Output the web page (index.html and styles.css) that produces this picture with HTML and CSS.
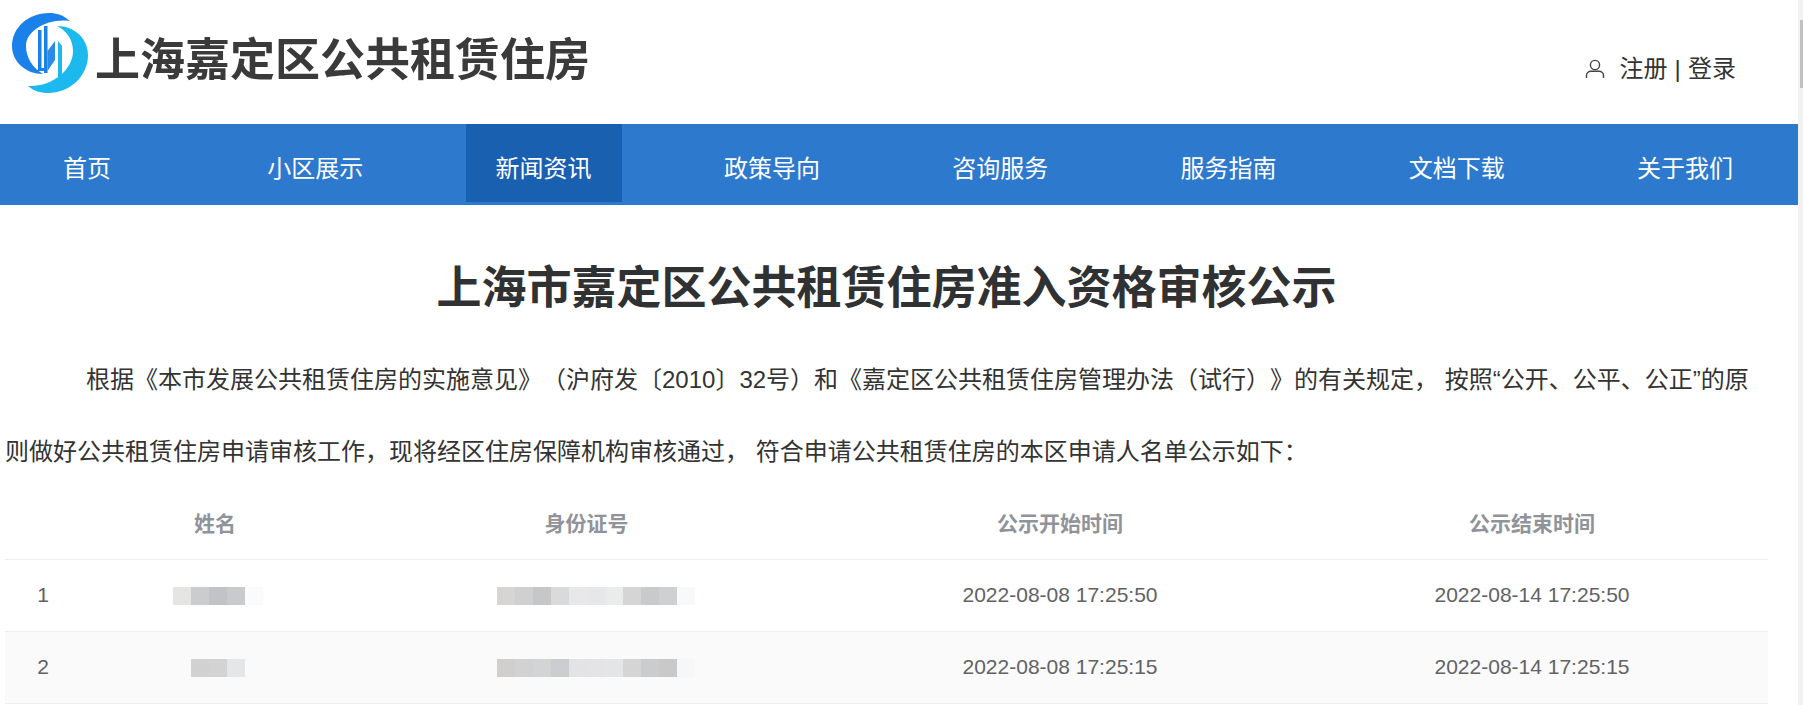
FILE: index.html
```html
<!DOCTYPE html>
<html lang="zh-CN">
<head>
<meta charset="utf-8">
<title>上海嘉定区公共租赁住房</title>
<link rel="stylesheet" href="styles.css">
</head>
<body>
<div class="page">
  <header class="top">
    <div class="brand">
      <svg class="logo" viewBox="0 0 90 90" aria-hidden="true">
        <path class="logo-left" d="M65 13C58 7 52 5 44 5 23 5 7 20 7 38c0 16 14 28 31 28-10-6-17-16-17-28C21 23 42 10 65 13Z"/>
        <path class="logo-right" d="M23 78c6 5 12 7 20 7 22 0 40-17 40-38 0-16-13-29-31-29 10 5 16 14 16 25C68 62 47 79 23 78Z"/>
        <path class="logo-left" d="M33 22h3.500v41H33zM39 18h3.500v47H39zM36.500 60H39v3h-2.500z"/>
        <path class="logo-wedge" d="M42.500 43 50 33v19l-7.500 11z"/>
        <path class="logo-right" d="M53 33l4 5v31h-4z"/>
      </svg>
      <span class="brand-name">上海嘉定区公共租赁住房</span>
    </div>
    <div class="account">
      <svg class="user" viewBox="0 0 20 20" aria-hidden="true">
        <circle cx="10" cy="6" r="4.600"/>
        <path d="M1.500 19v-2.500c0-2.500 2-4.200 4.500-4.200h8c2.500 0 4.500 1.700 4.500 4.200V19"/>
      </svg>
      <span class="account-links">注册 | 登录</span>
    </div>
  </header>

  <nav class="nav">
    <a class="nav-item">首页</a>
    <a class="nav-item">小区展示</a>
    <a class="nav-item active">新闻资讯</a>
    <a class="nav-item">政策导向</a>
    <a class="nav-item">咨询服务</a>
    <a class="nav-item">服务指南</a>
    <a class="nav-item">文档下载</a>
    <a class="nav-item">关于我们</a>
  </nav>

  <main class="content">
    <h1 class="title">上海市嘉定区公共租赁住房准入资格审核公示</h1>
    <p class="intro">根据《本市发展公共租赁住房的实施意见》（沪府发〔2010〕32号）和《嘉定区公共租赁住房管理办法（试行）》的有关规定， 按照“公开、公平、公正”的原则做好公共租赁住房申请审核工作，现将经区住房保障机构审核通过， 符合申请公共租赁住房的本区申请人名单公示如下：</p>

    <div class="table">
      <div class="row head">
        <div class="cell"></div>
        <div class="cell">姓名</div>
        <div class="cell">身份证号</div>
        <div class="cell">公示开始时间</div>
        <div class="cell">公示结束时间</div>
      </div>
      <div class="row">
        <div class="cell">1</div>
        <div class="cell"><i class="mosaic name-1"></i></div>
        <div class="cell"><i class="mosaic id-1"></i></div>
        <div class="cell">2022-08-08 17:25:50</div>
        <div class="cell">2022-08-14 17:25:50</div>
      </div>
      <div class="row striped">
        <div class="cell">2</div>
        <div class="cell"><i class="mosaic name-2"></i></div>
        <div class="cell"><i class="mosaic id-2"></i></div>
        <div class="cell">2022-08-08 17:25:15</div>
        <div class="cell">2022-08-14 17:25:15</div>
      </div>
    </div>
  </main>
  <div class="scrollbar"><div class="thumb"></div></div>
</div>
</body>
</html>
```

FILE: styles.css
```css
* { box-sizing: border-box; }
html, body { margin: 0; height: 705px; overflow: hidden; background: #fff; }
body { font-family: "Liberation Sans", "Noto Sans CJK SC", sans-serif; color: #333; text-spacing-trim: space-all; }
.page { position: relative; width: 1803px; height: 705px; padding-right: 5px; }

.top { height: 124px; display: flex; align-items: flex-start; justify-content: space-between; }
.brand { display: flex; align-items: flex-start; padding: 8px 0 0 5px; }
.logo { width: 90px; height: 90px; flex: none; filter: blur(.5px); }
.logo-left { fill: #1a80ea; }
.logo-right { fill: #1cb9ef; }
.logo-wedge { fill: #2a8ce8; }
.brand-name { margin: 25px 0 0 0; font-size: 45px; line-height: 56px; font-weight: 700; color: #3a3a3a; filter: blur(.5px); }
.account { display: flex; align-items: center; gap: 14px; padding: 51px 62px 0 0; font-size: 24px; line-height: 36px; color: #333; }
.account-links { word-spacing: .5px; }
.user { width: 20px; height: 20px; fill: none; stroke: #444; stroke-width: 1.4; }

.nav { height: 81px; background: #2d79cd; display: flex; align-items: flex-start; gap: 72.3px; padding-left: 9px; }
.nav-item { width: 156px; height: 78px; padding-top: 12px; color: #fff; font-size: 24px; line-height: 66px; text-align: center; }
.nav-item.active { background: #1a60b0; }

.content { padding: 0 30px 0 5px; }
.title { margin: 0; padding-top: 56px; height: 114px; font-size: 45px; line-height: 56px; font-weight: 700; text-align: center; color: #303133; }
.intro { margin: 0; padding-top: 25px; width: 1763px; font-size: 24px; line-height: 72px; text-indent: 81px; color: #333; }

.row { display: grid; grid-template-columns: 76px 268px 475px 472px 472px; height: 72px; border-bottom: 1px solid #ebeef5; font-size: 21px; color: #606266; }
.row.head { font-weight: 700; color: #909399; }
.row.striped { background: #fafafa; }
.cell { display: flex; align-items: center; justify-content: center; padding-bottom: 2px; white-space: nowrap; }
.head .cell { padding-bottom: 3px; }

.mosaic { display: block; height: 18px; position: relative; top: 1px; }
.name-1 { width: 90px; left: 3px; background: linear-gradient(90deg, #e5e5e3 20%, #cbccce 20% 40%, #c2c3c7 40% 60%, #c9cacc 60% 80%, #fbfbfb 80%); }
.name-2 { width: 54px; left: 3px; background: linear-gradient(90deg, #d1d1d1 33.33%, #d3d3d3 33.33% 66.66%, #e5e6e8 66.66%); }
.id-1 { width: 198px; left: 9.5px; background: linear-gradient(90deg, #d6d5d3 9.09%, #cfd0d2 9.09% 18.18%, #c7c7c7 18.18% 27.27%, #d9dadc 27.27% 36.36%, #e8e8ea 36.36% 45.45%, #e6e7e9 45.45% 54.54%, #eaecec 54.54% 63.63%, #d6d5d6 63.63% 72.72%, #c9cacc 72.72% 81.81%, #cfd0d2 81.81% 90.9%, #f8f9fb 90.9%); }
.id-2 { width: 198px; left: 9.5px; background: linear-gradient(90deg, #d0cfcd 9.09%, #d1d2d4 9.09% 18.18%, #d3d4d6 18.18% 27.27%, #cbcdd0 27.27% 36.36%, #e3e3e5 36.36% 45.45%, #e4e4e6 45.45% 54.54%, #e3e5e6 54.54% 63.63%, #d6d5d6 63.63% 72.72%, #caccce 72.72% 81.81%, #c9c9c9 81.81% 90.9%, #f6f7f9 90.9%); }

.scrollbar { position: absolute; top: 0; right: 0; width: 5px; height: 705px; background: #f1f1f1; }
.thumb { position: absolute; top: 20px; right: 0; width: 3px; height: 68px; background: #c1c1c1; }
```
